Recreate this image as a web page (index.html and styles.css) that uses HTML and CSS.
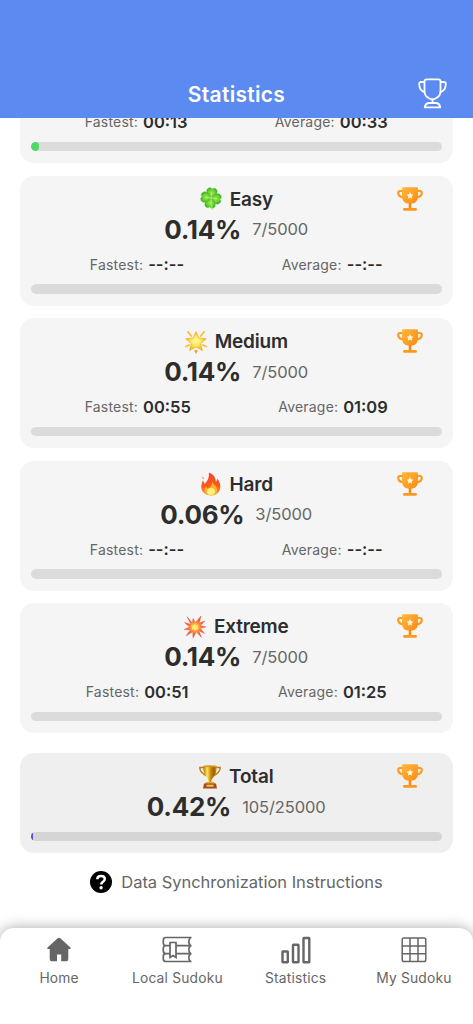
FILE: index.html
```
<!DOCTYPE html>
<html lang="en">
<head>
<meta charset="utf-8">
<meta name="viewport" content="width=device-width, initial-scale=1">
<title>Statistics</title>
<link rel="stylesheet" href="styles.css">
</head>
<body>
<svg class="defs" width="0" height="0" aria-hidden="true">
  <defs>
    <linearGradient id="orange" x1="0" y1="0" x2="1" y2="1"><stop offset="0" stop-color="#ffb83d"/><stop offset="1" stop-color="#fb8a12"/></linearGradient>
    <linearGradient id="gold" x1="0" y1="0" x2="1" y2="0"><stop offset="0" stop-color="#b87808"/><stop offset=".3" stop-color="#ffe35c"/><stop offset=".55" stop-color="#c98a0b"/><stop offset=".8" stop-color="#9b5c05"/><stop offset="1" stop-color="#dda31f"/></linearGradient>
    <radialGradient id="leaf"><stop offset="0" stop-color="#a6e84f"/><stop offset=".6" stop-color="#6bd332"/><stop offset="1" stop-color="#3fb722"/></radialGradient>
    <radialGradient id="starfill"><stop offset="0" stop-color="#fffbb0"/><stop offset=".5" stop-color="#ffe558"/><stop offset="1" stop-color="#f5ad24"/></radialGradient>
    <linearGradient id="flame" x1="0" y1="0" x2="0" y2="1"><stop offset="0" stop-color="#f2452c"/><stop offset=".6" stop-color="#fb5a1d"/><stop offset="1" stop-color="#ff9d1f"/></linearGradient>
    <radialGradient id="boom"><stop offset="0" stop-color="#fff27a"/><stop offset=".35" stop-color="#ffa53c"/><stop offset=".65" stop-color="#f0603a"/><stop offset="1" stop-color="#e2442e"/></radialGradient>
    <symbol id="prize" viewBox="0 0 26 24">
      <path d="M6 4H3.200Q1.200 4 1.200 5.800Q1.200 10.200 7 10.500M20 4h2.800Q24.800 4 24.800 5.800Q24.800 10.200 19 10.500" fill="none" stroke="#fb9b20" stroke-width="2.200"/>
      <path d="M5 1.500Q5 .2 6.300 .2H19.700Q21 .2 21 1.500V9Q21 15.500 15.500 16.600H10.500Q5 15.500 5 9Z" fill="url(#orange)"/>
      <path d="M11.700 16h2.600v5.500h-2.600z" fill="#f58b12"/>
      <rect x="6" y="21" width="14" height="2.800" rx="1.400" fill="#fc9820"/>
      <path d="M13 5.100l1.050 2.200 2.400.35-1.750 1.700.4 2.400-2.100-1.150-2.100 1.150.4-2.400-1.750-1.700 2.400-.35z" fill="#fff6df"/>
    </symbol>
  </defs>
</svg>
<div class="app">
  <header class="header">
    <span></span>
    <h1 class="header-title">Statistics</h1>
    <svg class="header-icon" viewBox="0 0 29 31" fill="none" stroke="#fff" stroke-width="1.800" stroke-linejoin="round">
      <path d="M6.500 3.500Q6.500 1.300 8.700 1.300H20.300Q22.500 1.300 22.500 3.500V12.500Q22.500 18.500 18 20.200Q14.500 22.300 11 20.200Q6.500 18.500 6.500 12.500Z"/>
      <path d="M6.500 4H3Q1 4 1.200 6.200C1.400 10.500 3 13.300 7 14.300M22.500 4H26Q28 4 27.800 6.200C27.600 10.500 26 13.300 22 14.300M14.500 21.300V25M10.500 25H18.500Q21.500 25.500 22.300 29.300H6.700Q7.500 25.500 10.500 25Z"/>
    </svg>
  </header>

  <main class="list">
    <section class="card card-clipped">
      <div class="times"><p class="time">Fastest: <b>00:13</b></p><p class="time">Average: <b>00:33</b></p></div>
      <div class="bar"><div class="fill fill-green"></div></div>
    </section>

    <section class="card">
      <svg class="prize"><use href="#prize"/></svg>
      <h2 class="name"><svg class="emoji" viewBox="0 0 22 24"><g fill="url(#leaf)" stroke="#4fbd2a" stroke-width=".4" transform="rotate(8 11 11)">
        <path d="M11 11C7 9 5.500 6 5.800 3.500C6.500 1 10 -.2 11 2.300C12 -.2 15.500 1 16.200 3.500C16.500 6 15 9 11 11Z"/>
        <path d="M11 11C7 9 5.500 6 5.800 3.500C6.500 1 10 -.2 11 2.300C12 -.2 15.500 1 16.200 3.500C16.500 6 15 9 11 11Z" transform="rotate(90 11 11)"/>
        <path d="M11 11C7 9 5.500 6 5.800 3.500C6.500 1 10 -.2 11 2.300C12 -.2 15.500 1 16.200 3.500C16.500 6 15 9 11 11Z" transform="rotate(180 11 11)"/>
        <path d="M11 11C7 9 5.500 6 5.800 3.500C6.500 1 10 -.2 11 2.300C12 -.2 15.500 1 16.200 3.500C16.500 6 15 9 11 11Z" transform="rotate(270 11 11)"/></g>
        <path d="M11.500 5.500L11 11M5.500 10.500L16.500 11.500M11 11Q11 18 12.500 23" fill="none" stroke="#b5ec7b" stroke-width="1"/></svg>Easy</h2>
      <p class="score"><strong>0.14%</strong><span>7/5000</span></p>
      <div class="times"><p class="time">Fastest: <b>--:--</b></p><p class="time">Average: <b>--:--</b></p></div>
      <div class="bar"></div>
    </section>

    <section class="card">
      <svg class="prize"><use href="#prize"/></svg>
      <h2 class="name"><svg class="emoji" viewBox="0 0 22 24">
        <path d="M11 1.500l2.900 6.500 7.300.8-5.500 4.800 1.700 7-6.400-3.600-6.400 3.600 1.700-7L.8 8.800l7.300-.8z" fill="url(#starfill)" stroke="#f2b435" stroke-width=".8" stroke-linejoin="round"/>
        <path d="M3 2l3.300 4M19 2l-3.300 4M1 16.500l3-1.500M21 16.500l-3-1.500" stroke="#f7bd3d" stroke-width="1.800" stroke-linecap="round"/>
        <path d="M9 20.300h4L11 24z" fill="#ee9d27"/></svg>Medium</h2>
      <p class="score"><strong>0.14%</strong><span>7/5000</span></p>
      <div class="times"><p class="time">Fastest: <b>00:55</b></p><p class="time">Average: <b>01:09</b></p></div>
      <div class="bar"></div>
    </section>

    <section class="card">
      <svg class="prize"><use href="#prize"/></svg>
      <h2 class="name"><svg class="emoji" viewBox="0 0 22 24">
        <path d="M8.800 .5C14 2.500 16 6 15.700 9.800Q17 9 17.300 6.700C20 10 21 13.500 20 17C18.800 21 15.500 23.500 11 23.500C6 23.500 2 20.500 1.300 16C.9 13 2.300 11 2.800 8.500Q4.500 10 4.500 12C7.500 9.500 9.500 5.500 8.800 .5Z" fill="url(#flame)"/>
        <path d="M2.500 4.300Q4.200 5.500 3.500 7.500Q2 6.500 2.500 4.300Z" fill="#f4683e"/>
        <path d="M12 9C13 13 17.500 14 17.300 18C17 21.500 14 23 10.500 23C6.500 23 4.200 20.500 4.500 17.500Q4.700 15.500 6 14.500Q6.500 16.500 8 16.500C10.500 15 12.500 13 12 9Z" fill="#ffb429"/>
        <ellipse cx="11" cy="19.500" rx="4" ry="3.500" fill="#fff27c"/></svg>Hard</h2>
      <p class="score"><strong>0.06%</strong><span>3/5000</span></p>
      <div class="times"><p class="time">Fastest: <b>--:--</b></p><p class="time">Average: <b>--:--</b></p></div>
      <div class="bar"></div>
    </section>

    <section class="card">
      <svg class="prize"><use href="#prize"/></svg>
      <h2 class="name"><svg class="emoji" viewBox="0 0 22 24">
        <path d="M3 1.500L8.300 8L9 3.500L11.500 7.500L17 1L15.300 8L21 6L16.300 10.500L22 12L16.300 13.300L20.500 18.500L14.800 15.800L17.500 22.500L12.300 16.800L9 23L8.700 16.800L2 21L6.300 14.800L0 14.500L5.500 12L.5 7.500L6.800 9.200Z" fill="url(#boom)" stroke="#e45d3e" stroke-width=".4"/>
        <path d="M11 9l1.200 1.700 2.300-.4-1.200 2 1.200 2-2.300-.4-1.200 2-1-2-2.500.4 1.200-2-1.200-2 2.500.4z" fill="#ffef73"/></svg>Extreme</h2>
      <p class="score"><strong>0.14%</strong><span>7/5000</span></p>
      <div class="times"><p class="time">Fastest: <b>00:51</b></p><p class="time">Average: <b>01:25</b></p></div>
      <div class="bar"></div>
    </section>

    <section class="card card-total">
      <svg class="prize"><use href="#prize"/></svg>
      <h2 class="name"><svg class="emoji" viewBox="0 0 22 24">
        <path d="M5 2.500H.8Q.8 7.500 7 10.500M17 2.500H21.200Q21.200 7.500 15 10.500" fill="none" stroke="#b97c12" stroke-width="1.400"/>
        <path d="M4.300 1H17.700Q18 8.500 14.500 12Q12.200 14 12.200 17H9.800Q9.800 14 7.500 12Q4 8.500 4.300 1Z" fill="url(#gold)"/>
        <ellipse cx="11" cy="1.300" rx="6.700" ry="1" fill="#d39a1d"/>
        <path d="M7 17h8l1 2H6z" fill="#e1a82a"/><path d="M5 18.500H17L18 23.500H4Z" fill="#a44a1c"/><rect x="7.500" y="19.700" width="7" height="2" fill="#f0c54d"/></svg>Total</h2>
      <p class="score"><strong>0.42%</strong><span>105/25000</span></p>
      <div class="bar"><div class="fill fill-purple"></div></div>
    </section>

    <p class="sync"><svg class="help" viewBox="0 0 22 22"><circle cx="11" cy="11" r="11"/><path d="M7.300 8.300Q7.300 4.900 11 4.900Q14.800 4.900 14.800 8Q14.800 9.600 12.900 10.800Q11.200 11.800 11.200 13.500" fill="none" stroke="#fff" stroke-width="2.500"/><circle cx="11.100" cy="16.700" r="1.700" fill="#fff"/></svg>Data Synchronization Instructions</p>
  </main>

  <nav class="tabs">
    <a class="tab"><svg class="tab-icon" viewBox="0 0 30 28"><path d="M15 1.800Q15.700 1.800 16.300 2.300L26.200 11.200Q27 12 26.700 12.500Q26.500 13 25.500 13H24.300V23Q24.300 25.200 22.300 25.200H17.200V18.500H13V25.200H7.700Q5.700 25.200 5.700 23V13H4.500Q3.500 13 3.300 12.500Q3 12 3.800 11.200L13.700 2.300Q14.300 1.800 15 1.800Z" fill="#666"/></svg>Home</a>
    <a class="tab"><svg class="tab-icon" viewBox="0 0 30 28" fill="none" stroke="#666" stroke-width="1.700"><path d="M29.500 1.500H4Q1.300 1.500 1.300 4V7Q1.300 9.700 4 9.700H7.500M13.800 9.700H29.500M4 9.700Q1.300 9.700 1.300 12V15Q1.300 17.600 4 17.600H7.500M13.800 17.600H29.500M4 17.600Q1.300 17.600 1.300 20V23Q1.300 25.500 4 25.500H29.500M28.500 1.500Q25 5.500 28.500 9.700Q25 13.500 28.500 17.600Q25 21.500 28.500 25.500M8 6.500H14V21.500L11 19.500L8 21.500Z"/></svg>Local Sudoku</a>
    <a class="tab"><svg class="tab-icon" viewBox="0 0 30 28" fill="none" stroke="#666" stroke-width="2.400"><rect x="1.500" y="15.500" width="5.300" height="10.700" rx=".4"/><rect x="12" y="8.800" width="5.500" height="17.400" rx=".4"/><rect x="22.500" y="2" width="5.800" height="24.200" rx=".4"/></svg>Statistics</a>
    <a class="tab"><svg class="tab-icon" viewBox="0 0 30 28" fill="none" stroke="#666" stroke-width="1.500"><rect x="3.200" y="2" width="23.600" height="23.600" rx="1.800"/><path d="M3 9.900H27M3 17.800H27M11 2V25.600M19 2V25.600"/></svg>My Sudoku</a>
  </nav>
</div>
</body>
</html>
```
FILE: styles.css
```
* { box-sizing: border-box; margin: 0; padding: 0; }
body { background: #fff; color: #666; font-family: Inter, "Liberation Sans", sans-serif; }
.defs { display: block; height: 0; }
.app { height: 1024px; display: flex; flex-direction: column; overflow: hidden; }

.header {
  height: 118px; flex: none; padding: 0 26px 9px;
  display: grid; grid-template-columns: 1fr auto 1fr; align-items: end;
  background: #5b8bf0;
}
.header-title { color: #fff; font-size: 21px; line-height: 28px; font-weight: 600; letter-spacing: .3px; }
.header-icon { width: 29px; height: 31px; justify-self: end; }

.list { height: 810px; flex: none; padding: 0 20px; display: flex; flex-direction: column; gap: 12.500px; }
.card {
  position: relative; height: 130px; flex: none; padding: 8.500px 11.500px 12px 11px;
  display: flex; flex-direction: column;
  background: #f5f5f5; border-radius: 14px;
}
.card-clipped { height: 45px; padding-top: 0; justify-content: flex-end; overflow: hidden; border-radius: 0 0 14px 14px; }
.card-total { height: 100px; margin-top: 7.500px; background: #efefef; }
.prize { position: absolute; top: 11px; right: 30px; width: 26px; height: 24px; }
.name {
  height: 30px; display: flex; align-items: center; justify-content: center; gap: 8px;
  color: #2d2d2d; font-size: 19px; font-weight: 600; letter-spacing: -.2px;
}
.emoji { width: 22px; height: 24px; }
.score { height: 30px; display: flex; align-items: center; justify-content: center; gap: 11px; font-size: 16.500px; letter-spacing: -.1px; }
.score strong { color: #2d2d2d; font-size: 26px; font-weight: 700; letter-spacing: -.3px; }
.times { height: 30px; flex: none; margin: 5px 0; padding: 0 10px; display: flex; align-items: center; justify-content: space-around; }
.card-clipped .times { margin-top: 0; }
.time { display: flex; align-items: center; gap: 5px; font-size: 14px; letter-spacing: .2px; }
.time b { color: #2d2d2d; font-size: 16.500px; font-weight: 600; letter-spacing: 0; }
.bar { height: 9.500px; flex: none; border-radius: 5px; background: #dbdbdb; overflow: hidden; }
.card-total .bar { margin-top: 10px; background: #d5d5d5; }
.fill { height: 100%; border-radius: 5px; }
.fill-green { width: 7.500px; background: #4cd964; }
.fill-purple { width: 2px; background: #5b4bef; }

.sync { margin-top: 1px; height: 30px; display: flex; align-items: center; justify-content: center; gap: 9px; font-size: 16.500px; letter-spacing: -.03px; }
.help { width: 22px; height: 22px; }

.tabs {
  position: relative; height: 96px; flex: none; padding-top: 8px;
  display: grid; grid-template-columns: repeat(4, 1fr);
  background: #fff; border-radius: 14px 14px 0 0; box-shadow: 0 0 14px rgba(0, 0, 0, .35);
}
.tab { display: flex; flex-direction: column; align-items: center; gap: 3.500px; font-size: 13.800px; line-height: 20px; letter-spacing: .2px; white-space: nowrap; }
.tab-icon { width: 30px; height: 28px; }
```
